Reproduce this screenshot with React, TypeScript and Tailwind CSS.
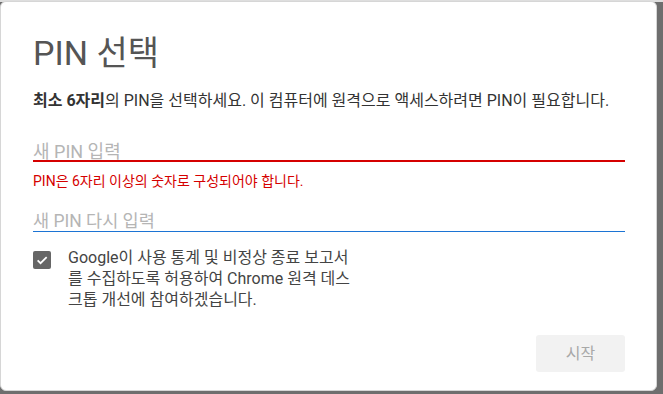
import React, { useState } from 'react';

export default function App() {
  const [checked, setChecked] = useState(true);

  return (
    <div
      className="h-[394px] w-[663px] overflow-hidden bg-[#6e6e6e]"
      style={{ fontFamily: 'Roboto, "Noto Sans CJK KR", sans-serif' }}
    >
      <div className="h-[2px] w-full bg-[#dedede]" />
      <div className="-mt-[1px] flex h-[390px] w-[657px] flex-col rounded-[6px] border border-[#d6d6d6] bg-white pl-[32px] pr-[31px] pt-[29px]">
        <h1 className="text-[34px] leading-[44px] font-normal text-[#555555]">PIN 선택</h1>

        <p className="mt-[15px] text-[16px] leading-[22px] text-[#333333]">
          <span className="font-bold">최소 6자리</span>의 PIN을 선택하세요. 이 컴퓨터에 원격으로 액세스하려면 PIN이 필요합니다.
        </p>

        <div className="mt-[20px]">
          <input
            type="password"
            placeholder="새 PIN 입력"
            className="block h-[28px] w-full bg-transparent pt-[10px] text-[18px] text-[#333] outline-none placeholder:text-[#b5b5b5]"
          />
          <div className="h-[2px] w-full bg-[#d50000]" />
        </div>
        <p className="mt-[11px] text-[14px] leading-[16px] text-[#d50000]">PIN은 6자리 이상의 숫자로 구성되어야 합니다.</p>

        <div className="mt-[12px]">
          <input
            type="password"
            placeholder="새 PIN 다시 입력"
            className="block h-[30px] w-full bg-transparent pt-[10px] text-[17.5px] text-[#333] outline-none placeholder:text-[#b5b5b5]"
          />
          <div className="h-[1px] w-full bg-[#1c74d4]" />
        </div>

        <label className="mt-[15px] flex cursor-pointer items-start gap-[17px]">
          <button
            type="button"
            onClick={() => setChecked(!checked)}
            className={`mt-[4px] flex h-[18px] w-[18px] shrink-0 items-center justify-center rounded-[2px] ${checked ? 'bg-[#666666]' : 'border-2 border-[#666666] bg-white'}`}
          >
            {checked && (
              <svg width="14" height="14" viewBox="0 0 24 24" fill="none">
                <path d="M4.5 12.5l5 5L20 7" stroke="white" strokeWidth="3" />
              </svg>
            )}
          </button>
          <span className="flex flex-col text-[16px] leading-[21px] text-[#444444]">
            <span>Google이 사용 통계 및 비정상 종료 보고서</span>
            <span>를 수집하도록 허용하여 Chrome 원격 데스</span>
            <span>크톱 개선에 참여하겠습니다.</span>
          </span>
        </label>

        <div className="mt-auto mb-[18px] flex justify-end">
          <button
            type="button"
            disabled
            className="h-[37px] w-[89px] rounded-[3px] bg-[#f2f2f2] text-[16px] text-[#a8a8a8]"
          >
            시작
          </button>
        </div>
      </div>
    </div>
  );
}
